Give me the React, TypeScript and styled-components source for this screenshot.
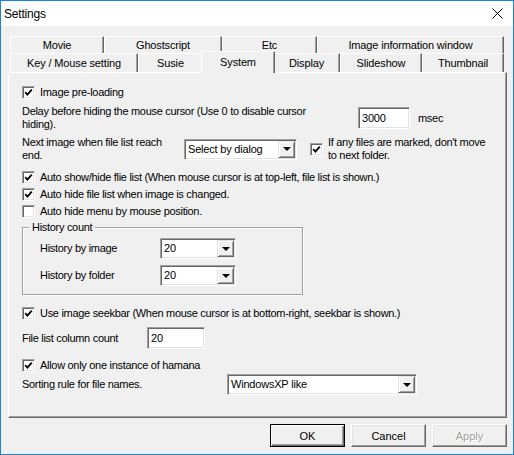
import React from 'react';
import styled, { createGlobalStyle } from 'styled-components';

const GlobalStyle = createGlobalStyle`
  html, body {
    margin: 0;
    padding: 0;
    background: #ffffff;
  }
  body {
    font-family: "Liberation Sans", Arial, sans-serif;
    font-size: 11px;
    color: #000;
  }
  * {
    box-sizing: border-box;
  }
`;

const Window = styled.div`
  width: 514px;
  height: 455px;
  border: 1px solid #1883d7;
  background: #f0f0f0;
  display: flex;
  flex-direction: column;
`;

const TitleBar = styled.div`
  height: 25px;
  flex: 0 0 25px;
  background: #ffffff;
  display: flex;
  align-items: center;
  justify-content: space-between;
  padding: 0 10px 0 3px;
`;

const Title = styled.span`
  font-size: 12px;
  letter-spacing: -0.2px;
`;

const Body = styled.div`
  flex: 1;
  display: flex;
  flex-direction: column;
  padding: 10px 6px 7px 7px;
`;

const TabRow = styled.div<{ $h: number }>`
  display: flex;
  height: ${(p) => p.$h}px;
  padding-left: 2px;
`;

const Tab = styled.div<{ $w: number; $active?: boolean }>`
  flex: 0 0 ${(p) => (p.$active ? p.$w + 4 : p.$w)}px;
  display: flex;
  align-items: center;
  justify-content: center;
  background: #f0f0f0;
  border-left: 1px solid #ffffff;
  border-top: 1px solid #ffffff;
  border-right: 1px solid #696969;
  box-shadow: inset -1px 0 0 #a0a0a0;
  letter-spacing: -0.15px;
  white-space: nowrap;
  ${(p) =>
    p.$active &&
    `
    position: relative;
    z-index: 2;
    margin: -2px -2px -1px -2px;
    padding-bottom: 2px;
  `}
`;

const Panel = styled.div`
  height: 346px;
  flex: 0 0 346px;
  border-top: 1px solid #ffffff;
  border-left: 1px solid #ffffff;
  border-right: 1px solid #696969;
  border-bottom: 1px solid #696969;
  box-shadow: inset -1px -1px 0 #a0a0a0;
  padding: 13px 0 0 13px;
  display: flex;
  flex-direction: column;
  letter-spacing: -0.3px;
  line-height: 13px;
`;

const Row = styled.div<{ $h: number; $gap: number }>`
  display: flex;
  align-items: center;
  height: ${(p) => p.$h}px;
  flex: 0 0 ${(p) => p.$h}px;
  margin-top: ${(p) => p.$gap}px;
`;

const Label = styled.div<{ $w?: number }>`
  white-space: nowrap;
  ${(p) => (p.$w ? `flex: 0 0 ${p.$w}px;` : '')}
`;

const Box = styled.span`
  flex: 0 0 13px;
  width: 13px;
  height: 13px;
  background: #ffffff;
  border: 1px solid;
  border-color: #a0a0a0 #ffffff #ffffff #a0a0a0;
  box-shadow: inset 1px 1px 0 #696969, inset -1px -1px 0 #e3e3e3;
  display: flex;
  align-items: center;
  justify-content: center;
`;

const CheckWrap = styled.div<{ $ml?: number }>`
  display: flex;
  align-items: center;
  margin-left: ${(p) => p.$ml ?? 0}px;
`;

const CheckText = styled.span`
  margin-left: 5px;
  white-space: nowrap;
`;

const Field = styled.div<{ $w: number; $h: number }>`
  position: relative;
  flex: 0 0 ${(p) => p.$w}px;
  height: ${(p) => p.$h}px;
  background: #ffffff;
  border: 1px solid;
  border-color: #a0a0a0 #ffffff #ffffff #a0a0a0;
  box-shadow: inset 1px 1px 0 #696969, inset -1px -1px 0 #e3e3e3;
  display: flex;
  align-items: center;
  padding-left: 3px;
  white-space: nowrap;
  letter-spacing: -0.2px;
`;

const DropButton = styled.span`
  position: absolute;
  top: 1px;
  right: 1px;
  bottom: 1px;
  width: 17px;
  background: #f0f0f0;
  border: 1px solid;
  border-color: #e3e3e3 #696969 #696969 #e3e3e3;
  box-shadow: inset 1px 1px 0 #ffffff, inset -1px -1px 0 #a0a0a0;
  display: flex;
  align-items: center;
  justify-content: center;
`;

const Arrow = styled.span`
  width: 0;
  height: 0;
  border-left: 4px solid transparent;
  border-right: 4px solid transparent;
  border-top: 4px solid #000;
`;

const Unit = styled.span`
  margin-left: 8px;
`;

const Group = styled.div`
  position: relative;
  width: 281px;
  height: 68px;
  margin-top: 9px;
  border: 1px solid #a0a0a0;
  box-shadow: inset 1px 1px 0 #ffffff, 1px 1px 0 #ffffff;
  padding: 10px 0 0 17px;
  display: flex;
  flex-direction: column;
  gap: 6px;
`;

const Legend = styled.span`
  position: absolute;
  top: -7px;
  left: 6px;
  padding: 0 3px;
  background: #f0f0f0;
  line-height: 13px;
`;

const GroupRow = styled.div`
  display: flex;
  align-items: center;
  height: 21px;
`;

const ButtonBar = styled.div`
  display: flex;
  justify-content: flex-end;
  gap: 6px;
  margin-top: 6px;
`;

const Button = styled.div<{ $default?: boolean; $disabled?: boolean }>`
  width: 75px;
  height: 23px;
  display: flex;
  align-items: center;
  justify-content: center;
  background: #f0f0f0;
  border: 1px solid;
  border-color: ${(p) => (p.$default ? '#000 #000 #000 #000' : '#ffffff #696969 #696969 #ffffff')};
  box-shadow: ${(p) =>
    p.$default
      ? 'inset 1px 1px 0 #ffffff, inset -1px -1px 0 #696969, inset -2px -2px 0 #a0a0a0'
      : 'inset -1px -1px 0 #a0a0a0, inset 1px 1px 0 #e3e3e3'};
  color: ${(p) => (p.$disabled ? '#a0a0a0' : '#000')};
  text-shadow: ${(p) => (p.$disabled ? '1px 1px 0 #ffffff' : 'none')};
  font-size: 11px;
`;

const Check: React.FC<{ checked?: boolean }> = ({ checked }) => (
  <Box>
    {checked && (
      <svg width="9" height="9" viewBox="0 0 9 9">
        <path d="M1.2 4.2 L3.4 6.6 L7.8 1.6" fill="none" stroke="#000" strokeWidth="1.8" />
      </svg>
    )}
  </Box>
);

const CheckRow: React.FC<{ checked?: boolean; gap: number; children: React.ReactNode }> = ({
  checked,
  gap,
  children,
}) => (
  <Row $h={13} $gap={gap}>
    <Check checked={checked} />
    <CheckText>{children}</CheckText>
  </Row>
);

const Combo: React.FC<{ w: number; value: string }> = ({ w, value }) => (
  <Field $w={w} $h={21}>
    {value}
    <DropButton>
      <Arrow />
    </DropButton>
  </Field>
);

const topTabs = [
  { label: 'Movie', w: 94 },
  { label: 'Ghostscript', w: 118 },
  { label: 'Etc', w: 95 },
  { label: 'Image information window', w: 187 },
];

const bottomTabs = [
  { label: 'Key / Mouse setting', w: 128 },
  { label: 'Susie', w: 65 },
  { label: 'System', w: 70, active: true },
  { label: 'Display', w: 67 },
  { label: 'Slideshow', w: 82 },
  { label: 'Thumbnail', w: 82 },
];

export default function App() {
  return (
    <>
      <GlobalStyle />
      <Window>
        <TitleBar>
          <Title>Settings</Title>
          <svg width="11" height="11" viewBox="0 0 11 11">
            <path d="M0.5 0.5 L10.5 10.5 M10.5 0.5 L0.5 10.5" stroke="#000" strokeWidth="1" />
          </svg>
        </TitleBar>
        <Body>
          <TabRow $h={17}>
            {topTabs.map((t) => (
              <Tab key={t.label} $w={t.w}>
                {t.label}
              </Tab>
            ))}
          </TabRow>
          <TabRow $h={19}>
            {bottomTabs.map((t) => (
              <Tab key={t.label} $w={t.w} $active={t.active}>
                {t.label}
              </Tab>
            ))}
          </TabRow>
          <Panel>
            <CheckRow checked gap={0}>
              Image pre-loading
            </CheckRow>

            <Row $h={26} $gap={6}>
              <Label $w={336}>
                Delay before hiding the mouse cursor (Use 0 to disable cursor
                <br />
                hiding).
              </Label>
              <Field $w={52} $h={22}>
                3000
              </Field>
              <Unit>msec</Unit>
            </Row>

            <Row $h={26} $gap={5}>
              <Label $w={162}>
                Next image when file list reach
                <br />
                end.
              </Label>
              <Combo w={113} value="Select by dialog" />
              <CheckWrap $ml={13}>
                <Check checked />
                <CheckText>
                  If any files are marked, don't move
                  <br />
                  to next folder.
                </CheckText>
              </CheckWrap>
            </Row>

            <CheckRow checked gap={9}>
              Auto show/hide flie list (When mouse cursor is at top-left, file list is shown.)
            </CheckRow>
            <CheckRow checked gap={4}>
              Auto hide file list when image is changed.
            </CheckRow>
            <CheckRow gap={4}>Auto hide menu by mouse position.</CheckRow>

            <Group>
              <Legend>History count</Legend>
              <GroupRow>
                <Label $w={120}>History by image</Label>
                <Combo w={76} value="20" />
              </GroupRow>
              <GroupRow>
                <Label $w={120}>History by folder</Label>
                <Combo w={76} value="20" />
              </GroupRow>
            </Group>

            <CheckRow checked gap={12}>
              Use image seekbar (When mouse cursor is at bottom-right, seekbar is shown.)
            </CheckRow>

            <Row $h={22} $gap={7}>
              <Label $w={125}>File list column count</Label>
              <Field $w={58} $h={22}>
                20
              </Field>
            </Row>

            <CheckRow checked gap={10}>
              Allow only one instance of hamana
            </CheckRow>

            <Row $h={21} $gap={2}>
              <Label $w={205}>Sorting rule for file names.</Label>
              <Combo w={190} value="WindowsXP like" />
            </Row>
          </Panel>
          <ButtonBar>
            <Button $default>OK</Button>
            <Button>Cancel</Button>
            <Button $disabled>Apply</Button>
          </ButtonBar>
        </Body>
      </Window>
    </>
  );
}
